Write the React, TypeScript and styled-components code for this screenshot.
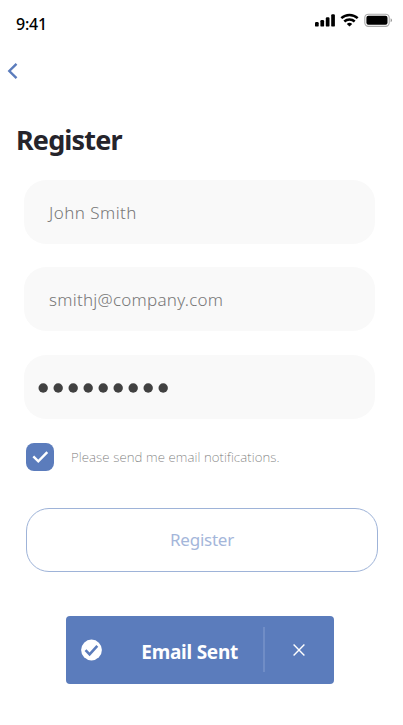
import React from 'react';
import styled, { createGlobalStyle } from 'styled-components';

const GlobalStyle = createGlobalStyle`
  * { box-sizing: border-box; }
  body { margin: 0; background: #fff; font-family: 'Noto Sans', 'Open Sans', sans-serif; }
  button, input { font-family: inherit; }
  button { cursor: pointer; padding: 0; border: 0; background: none; }
  svg { display: block; }
`;

const Screen = styled.main`
  width: 403px;
  height: 725px;
  overflow: hidden;
  background: #fff;
  display: flex;
  flex-direction: column;
`;

const StatusBar = styled.header`
  height: 48px;
  padding: 0 10px 0 16px;
  display: flex;
  justify-content: space-between;
  align-items: flex-start;
`;

const Clock = styled.time`
  margin-top: 14px;
  font-size: 16px;
  line-height: 20px;
  font-weight: 500;
  letter-spacing: -0.2px;
  color: #000;
`;

const StatusIcons = styled.div`
  display: flex;
  gap: 5px;
  margin-top: 13px;
`;

const BackButton = styled.button`
  width: 26px;
  height: 46px;
  padding-left: 7px;
  display: flex;
  align-items: center;
`;

const Title = styled.h1`
  margin: 26px 0 0 16px;
  height: 60px;
  font-size: 27px;
  line-height: 40px;
  font-weight: 700;
  letter-spacing: -0.85px;
  color: #25242b;
`;

const Form = styled.form`
  display: flex;
  flex-direction: column;
`;

const Fields = styled.div`
  display: flex;
  flex-direction: column;
  gap: 23.3px;
  margin-left: 24px;
`;

const Field = styled.label<{ $inset: number }>`
  width: 351px;
  height: 64px;
  padding: 2px 0 0 ${({ $inset }) => $inset}px;
  border-radius: 22px;
  background: #f9f9f9;
  display: flex;
  align-items: center;
`;

const FieldText = styled.span<{ $spacing: number }>`
  font-size: 17px;
  line-height: 24px;
  font-weight: 300;
  letter-spacing: ${({ $spacing }) => $spacing}px;
  color: #777;
`;

const Dots = styled.span`
  display: flex;
  gap: 5px;
`;

const Consent = styled.label`
  display: flex;
  align-items: center;
  gap: 17px;
  height: 28px;
  margin: 24.4px 0 0 26px;
`;

const Checkbox = styled.span`
  width: 28px;
  height: 28px;
  border-radius: 8px;
  background: #5b7cbc;
`;

const ConsentText = styled.span`
  font-size: 13.3px;
  line-height: 20px;
  font-weight: 200;
  letter-spacing: 0.08px;
  color: #777;
`;

const SubmitButton = styled.button`
  width: 352px;
  height: 64px;
  margin: 37px 0 0 26px;
  border: 1.3px solid #9eb3d8;
  border-radius: 23px;
  font-size: 17px;
  line-height: 24px;
  font-weight: 400;
  letter-spacing: -0.25px;
  color: #a4b6da;
`;

const Toast = styled.section`
  width: 267.5px;
  height: 68px;
  margin: 44px 0 0 66.3px;
  border-radius: 4px;
  background: #5b7cbc;
  display: grid;
  grid-template-columns: 51px 146px 2px 69px;
  align-items: center;
`;

const ToastIcon = styled.span`
  padding-left: 15px;
`;

const ToastMessage = styled.strong`
  padding: 4px 0 0 24px;
  font-size: 19px;
  line-height: 26px;
  font-weight: 700;
  letter-spacing: -0.25px;
  white-space: nowrap;
  color: #fff;
`;

const Divider = styled.span`
  height: 45px;
  background: #708dc6;
`;

const CloseButton = styled.button`
  display: flex;
  justify-content: center;
  padding-right: 2px;
`;

function SignalIcon() {
  return (
    <svg width="20" height="14" viewBox="0 0 20 14" fill="#000">
      <rect x="0" y="9" width="3.7" height="4.6" rx="1.2" />
      <rect x="5.4" y="7" width="3.7" height="6.6" rx="1.2" />
      <rect x="10.8" y="4.3" width="3.7" height="9.3" rx="1.2" />
      <rect x="16.2" y="1.2" width="3.7" height="12.4" rx="1.2" />
    </svg>
  );
}

function WifiIcon() {
  return (
    <svg width="19" height="14" viewBox="0 0 19 14" fill="none" stroke="#000" strokeWidth="2.5">
      <path d="M1.3 5.2C6 .9 13 .9 17.7 5.2" />
      <path d="M4.3 8.5C7.2 5.8 11.8 5.8 14.7 8.5" />
      <path d="M6.8 11Q9.5 8.7 12.2 11L9.5 13.6Z" fill="#000" stroke="none" />
    </svg>
  );
}

function BatteryIcon() {
  return (
    <svg width="29" height="14" viewBox="0 0 29 14">
      <rect x=".8" y="1.2" width="24.4" height="12.2" rx="3.6" fill="none" stroke="#aaa" strokeWidth="1.1" />
      <rect x="2.4" y="2.8" width="21.1" height="9" rx="2" fill="#000" />
      <path d="M26.6 5.3v4Q28 8.7 28 7.3T26.6 5.3" fill="#999" />
    </svg>
  );
}

function Dot() {
  return (
    <svg width="10" height="10" viewBox="0 0 10 10">
      <circle cx="5.2" cy="5" r="4.7" fill="#414141" />
    </svg>
  );
}

const fields = [
  { text: 'John Smith', spacing: 0.45 },
  { text: 'smithj@company.com', spacing: 0.26 },
];

export default function App() {
  return (
    <>
      <GlobalStyle />
      <Screen>
        <StatusBar>
          <Clock>9:41</Clock>
          <StatusIcons>
            <SignalIcon />
            <WifiIcon />
            <BatteryIcon />
          </StatusIcons>
        </StatusBar>
        <BackButton aria-label="Back">
          <svg width="12" height="18" viewBox="0 0 12 18" fill="none" stroke="#5b7cbc" strokeWidth="2.4">
            <path d="M9.5 1.8 2.3 9l7.2 7.2" />
          </svg>
        </BackButton>
        <Title>Register</Title>
        <Form>
          <Fields>
            {fields.map((field) => (
              <Field key={field.text} $inset={25}>
                <FieldText $spacing={field.spacing}>{field.text}</FieldText>
              </Field>
            ))}
            <Field $inset={14}>
              <Dots>
                {Array.from({ length: 9 }, (_, i) => (
                  <Dot key={i} />
                ))}
              </Dots>
            </Field>
          </Fields>
          <Consent>
            <Checkbox>
              <svg width="28" height="28" viewBox="0 0 28 28" fill="none" stroke="#fff" strokeWidth="2.4">
                <path d="m7.3 13.3 5 5 9-9.2" />
              </svg>
            </Checkbox>
            <ConsentText>Please send me email notifications.</ConsentText>
          </Consent>
          <SubmitButton type="button">Register</SubmitButton>
        </Form>
        <Toast role="status">
          <ToastIcon>
            <svg width="21" height="22" viewBox="0 0 21 22">
              <circle cx="10.5" cy="11" r="10.4" fill="#fff" />
              <path d="m4.5 11.2 4.1 4.1 7.7-8.4" fill="none" stroke="#5b7cbc" strokeWidth="2.6" />
            </svg>
          </ToastIcon>
          <ToastMessage>Email Sent</ToastMessage>
          <Divider />
          <CloseButton aria-label="Dismiss">
            <svg width="12" height="12" viewBox="0 0 12 12" fill="none" stroke="#fff" strokeWidth="1.4">
              <path d="m.6.6 10.8 10.8M11.4.6.6 11.4" />
            </svg>
          </CloseButton>
        </Toast>
      </Screen>
    </>
  );
}
